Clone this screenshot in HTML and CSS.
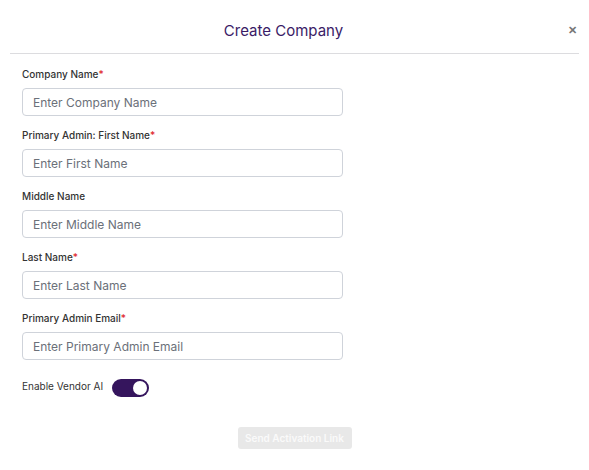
FILE: index.html
```html
<!DOCTYPE html>
<html>
<head>
<meta charset="utf-8">
<link rel="stylesheet" href="styles.css">
</head>
<body>
<div class="modal">
  <div class="header">
    <h1 class="title">Create Company</h1>
    <span class="close">&#x2715;</span>
  </div>
  <form class="body">
    <div class="field">
      <label class="label">Company Name<span class="req">*</span></label>
      <input class="input" placeholder="Enter Company Name">
    </div>
    <div class="field">
      <label class="label">Primary Admin: First Name<span class="req">*</span></label>
      <input class="input" placeholder="Enter First Name">
    </div>
    <div class="field">
      <label class="label">Middle Name</label>
      <input class="input" placeholder="Enter Middle Name">
    </div>
    <div class="field">
      <label class="label">Last Name<span class="req">*</span></label>
      <input class="input" placeholder="Enter Last Name">
    </div>
    <div class="field">
      <label class="label">Primary Admin Email<span class="req">*</span></label>
      <input class="input" placeholder="Enter Primary Admin Email">
    </div>
    <div class="toggle-row">
      <span class="label toggle-label">Enable Vendor AI</span>
      <span class="switch"><span class="knob"></span></span>
    </div>
    <div class="actions">
      <button type="button" class="btn" disabled>Send Activation Link</button>
    </div>
  </form>
</div>
</body>
</html>
```
FILE: styles.css
```css
html, body {
  margin: 0;
  padding: 0;
  background: #ffffff;
}
body {
  font-family: Inter, "Noto Sans", sans-serif;
  width: 589px;
  height: 470px;
  overflow: hidden;
}
.modal {
  padding: 0 10px;
}
.header {
  position: relative;
  height: 53px;
  padding-right: 22px;
  border-bottom: 1px solid #dcdcdf;
  display: flex;
  align-items: center;
  justify-content: center;
}
.title {
  margin: 0;
  margin-top: 8px;
  font-size: 15px;
  font-weight: 400;
  color: #3a1b66;
}
.close {
  position: absolute;
  right: 2px;
  top: 23px;
  font-size: 11px;
  font-weight: 700;
  color: #777;
}
.body {
  padding: 13px 12px 0;
  display: flex;
  flex-direction: column;
}
.field {
  display: flex;
  flex-direction: column;
  margin-bottom: 12px;
}
.label {
  font-size: 10px;
  line-height: 14px;
  font-weight: 500;
  color: #333333;
  margin-bottom: 7px;
}
.req {
  color: #e0262b;
}
.input {
  box-sizing: border-box;
  width: 321px;
  height: 28px;
  border: 1px solid #cfd3da;
  border-radius: 4px;
  padding: 0 10px;
  font-family: Inter, "Noto Sans", sans-serif;
  font-size: 12px;
  color: #333;
  outline: none;
}
.input::placeholder {
  color: #6b7079;
}
.toggle-row {
  display: flex;
  align-items: center;
  gap: 9px;
  margin-top: 7px;
}
.toggle-label {
  font-weight: 400;
  margin-bottom: 4px;
}
.switch {
  display: flex;
  align-items: center;
  justify-content: flex-end;
  width: 37px;
  height: 18px;
  box-sizing: border-box;
  padding: 2px;
  border-radius: 9px;
  background: #35155d;
}
.knob {
  width: 14px;
  height: 14px;
  border-radius: 50%;
  background: #ffffff;
}
.actions {
  display: flex;
  justify-content: center;
  margin-top: 30px;
}
.btn {
  width: 114px;
  height: 22px;
  border: none;
  border-radius: 3px;
  background: #e8e8e8;
  color: #fafafa;
  font-family: Inter, "Noto Sans", sans-serif;
  font-size: 10px;
  font-weight: 600;
  padding: 0;
}
```
